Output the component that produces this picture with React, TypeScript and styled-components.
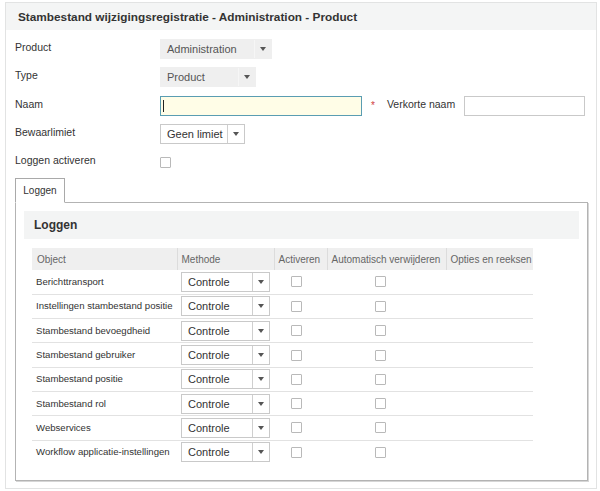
import React from "react";
import styled, { createGlobalStyle } from "styled-components";

const GlobalStyle = createGlobalStyle`
  html, body { margin: 0; padding: 0; background: #fff; }
  body { font-family: "Liberation Sans", Arial, sans-serif; color: #333; }
  * { box-sizing: border-box; }
`;

const Page = styled.div`
  padding: 2px 3px 0 5px;
`;

const Panel = styled.section`
  border: 1px solid #e2e3e3;
  height: 487px;
  display: flex;
  flex-direction: column;
`;

const PanelHeader = styled.header`
  height: 27px;
  background: #f4f5f5;
  padding-left: 12px;
  display: flex;
  align-items: center;
  font-weight: bold;
  font-size: 11.8px;
  color: #333;
`;

const Form = styled.div`
  display: flex;
  flex-direction: column;
  gap: 8.25px;
  padding: 9px 0 6px 9px;
`;

const FormRow = styled.div`
  display: flex;
  align-items: center;
  height: 20px;
`;

const Label = styled.div<{ $w?: number }>`
  width: ${(p) => p.$w ?? 145}px;
  align-self: flex-start;
  line-height: 16px;
  font-size: 10.5px;
  color: #333;
  flex-shrink: 0;
`;

const SelectBox = styled.div<{ $w: number; $gray?: boolean }>`
  width: ${(p) => p.$w}px;
  height: 20px;
  display: flex;
  align-items: stretch;
  background: ${(p) => (p.$gray ? "#efefef" : "#fff")};
  border: 1px solid ${(p) => (p.$gray ? "#efefef" : "#c9c9c9")};
  font-size: 11px;
  color: ${(p) => (p.$gray ? "#555" : "#333")};
`;

const SelectText = styled.span`
  flex: 1;
  padding-left: 6px;
  display: flex;
  align-items: center;
  white-space: nowrap;
  overflow: hidden;
`;

const ArrowArea = styled.span<{ $w: number; $gray?: boolean }>`
  width: ${(p) => p.$w}px;
  display: flex;
  align-items: center;
  justify-content: center;
  border-left: 1px solid ${(p) => (p.$gray ? "#f6f6f6" : "#cfcfcf")};
  &::after {
    content: "";
    width: 0;
    height: 0;
    border-left: 3.5px solid transparent;
    border-right: 3.5px solid transparent;
    border-top: 4px solid #555;
  }
`;

const TextInput = styled.div<{ $w: number; $focus?: boolean }>`
  width: ${(p) => p.$w}px;
  height: 20px;
  border: 1px solid ${(p) => (p.$focus ? "#5a9db2" : "#c9c9c9")};
  background: ${(p) => (p.$focus ? "#fffde7" : "#fff")};
  display: flex;
  align-items: center;
  padding-left: 2px;
`;

const Caret = styled.span`
  width: 1px;
  height: 12px;
  background: #222;
`;

const Required = styled.span`
  color: #d04040;
  font-size: 10px;
  margin: 0 12px 0 9px;
  padding-top: 3px;
  align-self: flex-start;
  line-height: 14px;
`;

const Check = styled.span`
  display: inline-block;
  width: 11px;
  height: 11px;
  border: 1px solid #b9b9b9;
  background: #fff;
  border-radius: 1px;
`;

const TabStrip = styled.div`
  display: flex;
  padding-left: 9px;
`;

const Tab = styled.div`
  width: 50px;
  height: 25px;
  border: 1px solid #a9a9a9;
  border-bottom: 1px solid #fff;
  background: #fff;
  margin-bottom: -1px;
  position: relative;
  z-index: 1;
  display: flex;
  align-items: center;
  justify-content: center;
  font-size: 10px;
  color: #333;
`;

const TabPanel = styled.div`
  margin: 0 8px 0 9px;
  height: 279px;
  border: 1px solid #b3b3b3;
  box-shadow: 1px 1px 0 #d6d6d6;
  padding: 8px;
`;

const SectionHeader = styled.div`
  height: 28px;
  background: #f3f4f4;
  padding-left: 10px;
  display: flex;
  align-items: center;
  font-weight: bold;
  font-size: 12px;
  color: #333;
`;

const Table = styled.table`
  margin: 9px 0 0 8px;
  width: 501px;
  border-collapse: collapse;
  table-layout: fixed;
  font-size: 9.6px;
`;

const Th = styled.th<{ $w: number }>`
  width: ${(p) => p.$w}px;
  height: 22px;
  background: #efefef;
  color: #666;
  font-size: 10px;
  font-weight: normal;
  text-align: left;
  padding: 0 4px;
  border-left: 1px solid #dcdcdc;
  white-space: nowrap;
  &:first-child { border-left: none; padding-left: 5px; }
`;

const Tr = styled.tr`
  height: 24.3px;
  border-bottom: 1px solid #e2e2e2;
  &:last-child { border-bottom: none; }
`;

const Td = styled.td<{ $pl?: number }>`
  padding: 0 0 0 ${(p) => p.$pl ?? 4}px;
  color: #333;
  white-space: nowrap;
  vertical-align: middle;
  line-height: 0;
`;

const CellText = styled.span`
  line-height: 14px;
`;

const rows = [
  "Berichttransport",
  "Instellingen stambestand positie",
  "Stambestand bevoegdheid",
  "Stambestand gebruiker",
  "Stambestand positie",
  "Stambestand rol",
  "Webservices",
  "Workflow applicatie-instellingen",
];

export default function App() {
  return (
    <>
      <GlobalStyle />
      <Page>
        <Panel>
          <PanelHeader>Stambestand wijzigingsregistratie - Administration - Product</PanelHeader>
          <Form>
            <FormRow>
              <Label>Product</Label>
              <SelectBox $w={112} $gray>
                <SelectText>Administration</SelectText>
                <ArrowArea $w={17} $gray />
              </SelectBox>
            </FormRow>
            <FormRow>
              <Label>Type</Label>
              <SelectBox $w={96} $gray>
                <SelectText>Product</SelectText>
                <ArrowArea $w={17} $gray />
              </SelectBox>
            </FormRow>
            <FormRow>
              <Label>Naam</Label>
              <TextInput $w={202} $focus>
                <Caret />
              </TextInput>
              <Required>*</Required>
              <Label $w={77}>Verkorte naam</Label>
              <TextInput $w={121} />
            </FormRow>
            <FormRow>
              <Label>Bewaarlimiet</Label>
              <SelectBox $w={85}>
                <SelectText>Geen limiet</SelectText>
                <ArrowArea $w={17} />
              </SelectBox>
            </FormRow>
            <FormRow>
              <Label>Loggen activeren</Label>
              <Check />
            </FormRow>
          </Form>
          <TabStrip>
            <Tab>Loggen</Tab>
          </TabStrip>
          <TabPanel>
            <SectionHeader>Loggen</SectionHeader>
            <Table>
              <thead>
                <tr>
                  <Th $w={145}>Object</Th>
                  <Th $w={97}>Methode</Th>
                  <Th $w={53}>Activeren</Th>
                  <Th $w={119}>Automatisch verwijderen</Th>
                  <Th $w={87}>Opties en reeksen</Th>
                </tr>
              </thead>
              <tbody>
                {rows.map((r) => (
                  <Tr key={r}>
                    <Td>
                      <CellText>{r}</CellText>
                    </Td>
                    <Td>
                      <SelectBox $w={89}>
                        <SelectText>Controle</SelectText>
                        <ArrowArea $w={17} />
                      </SelectBox>
                    </Td>
                    <Td $pl={17}>
                      <Check />
                    </Td>
                    <Td $pl={48}>
                      <Check />
                    </Td>
                    <Td />
                  </Tr>
                ))}
              </tbody>
            </Table>
          </TabPanel>
        </Panel>
      </Page>
    </>
  );
}
